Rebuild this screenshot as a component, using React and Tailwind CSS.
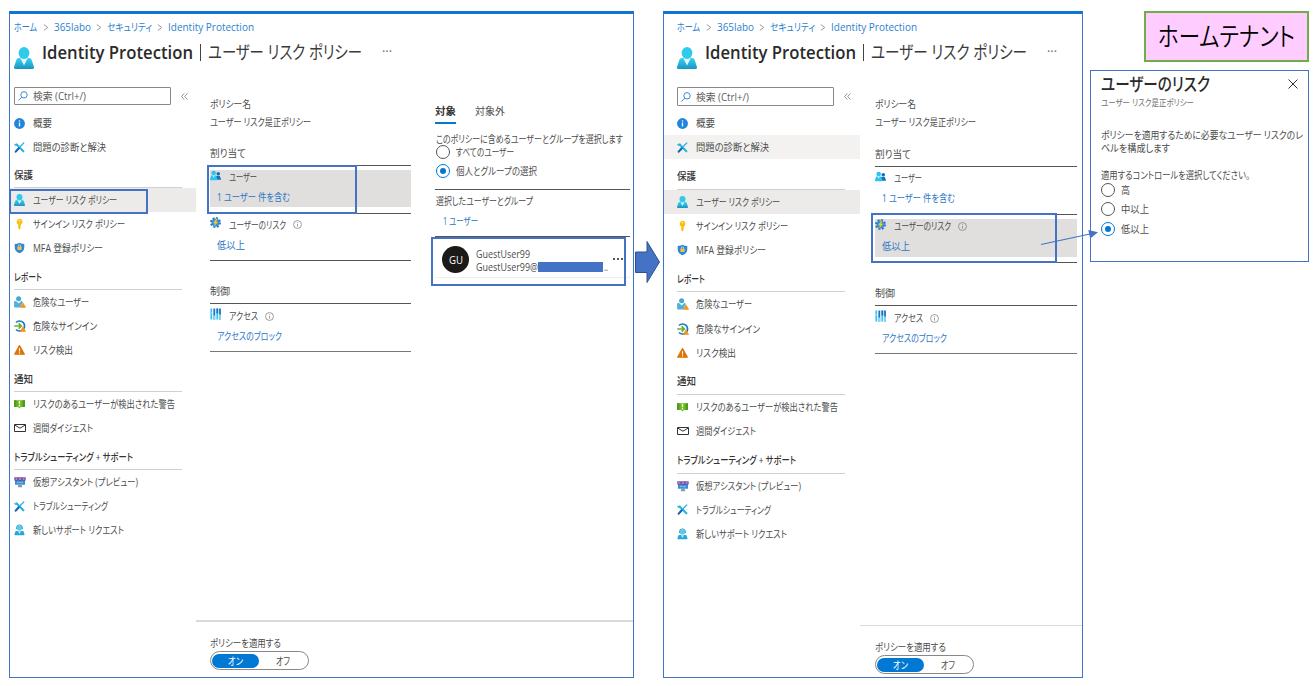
import { useLayoutEffect, useRef, useState } from "react";
import clsx from "clsx";

// Text squeezed horizontally so that it takes exactly `w` pixels
function Fit({ w, className, children }) {
  const ref = useRef(null);
  const [scale, setScale] = useState(1);

  useLayoutEffect(() => {
    const measure = () => {
      if (ref.current?.offsetWidth) {
        setScale((w / ref.current.getBoundingClientRect().width) * currentScale(ref.current));
      }
    };
    measure();
    document.fonts?.ready.then(measure);
  }, [w, children]);

  return (
    <span className={clsx("block shrink-0 whitespace-nowrap", className)} style={{ width: w }}>
      <span
        ref={ref}
        className="inline-block origin-left align-top"
        style={{ transform: `scaleX(${scale})` }}
      >
        {children}
      </span>
    </span>
  );
}

function currentScale(el) {
  const t = getComputedStyle(el).transform;
  return t === "none" ? 1 : new DOMMatrix(t).a;
}

/* ---------- icons ---------- */

function UserIcon({ className = "h-3 w-[11px]" }) {
  return (
    <svg viewBox="0 0 20 22" preserveAspectRatio="none" className={className}>
      <defs>
        <linearGradient id="usr" x1="0" y1="0" x2="0" y2="1">
          <stop offset="0" stopColor="#3ad3f2" />
          <stop offset="1" stopColor="#1994c2" />
        </linearGradient>
      </defs>
      <path d="M5 11h10c1.600 0 2.300.7 2.700 2L20 20.200c.3 1.100-.4 1.800-1.500 1.800h-17C.4 22-.3 21.300 0 20.200L2.300 13c.4-1.300 1.100-2 2.700-2z" fill="url(#usr)" />
      <path d="M6.300 11h7.400L10 18.500z" fill="#e3f7fc" />
      <ellipse cx="10" cy="6" rx="5.400" ry="5.900" fill="#2fcbea" />
    </svg>
  );
}

function InfoFilledIcon() {
  return (
    <svg viewBox="0 0 12 12" className="h-[11px] w-[11px]">
      <circle cx="6" cy="6" r="5.900" fill="#1f86dc" />
      <rect x="5.300" y="5" width="1.400" height="4.200" fill="#fff" />
      <circle cx="6" cy="3.300" r=".8" fill="#fff" />
    </svg>
  );
}

function ToolsIcon() {
  return (
    <svg viewBox="0 0 12 12" className="h-[11px] w-[11px]" fill="none" strokeLinecap="round">
      <path d="M2.800 2.600l7.400 7.600" stroke="#28b4de" strokeWidth="2.300" />
      <path d="M1 2.600c.4 1.300 1.900 1.500 2.600.2" stroke="#28b4de" strokeWidth="1.500" />
      <path d="M10.600 1L6.600 5.200" stroke="#3cb4e6" strokeWidth="1.500" />
      <path d="M5.200 6.900L1.900 10.500" stroke="#1467b0" strokeWidth="2.400" />
    </svg>
  );
}

function KeyIcon() {
  return (
    <svg viewBox="0 0 12 12" className="h-3 w-[11px]">
      <path d="M6 .3a3.300 3.300 0 0 1 1.500 6.200v1.200l-.7.7.7.7-.7.9.5.6L6 11.900l-1.400-1.300V6.500A3.300 3.300 0 0 1 6 .3z" fill="#fdbd0a" />
      <circle cx="6" cy="2.500" r=".8" fill="#fff3c4" />
    </svg>
  );
}

function ShieldIcon() {
  return (
    <svg viewBox="0 0 12 12" className="h-3 w-[11px]">
      <path d="M6 .4c1.500 1 3.400 1.200 5.200 1.200v4c0 3-2.900 5-5.200 6.200C3.700 10.600.8 8.600.8 5.600v-4C2.600 1.600 4.500 1.400 6 .4z" fill="#2f86dc" />
      <path d="M4.700 5V4a1.300 1.300 0 0 1 2.600 0v1" fill="none" stroke="#f5e6a8" strokeWidth=".9" />
      <rect x="3.700" y="4.700" width="4.600" height="3.500" rx=".5" fill="#f7c331" />
    </svg>
  );
}

function WarnBadge() {
  return <path d="M9 6.800L11.700 11.600H6.300z" fill="#f6921e" stroke="#f6921e" strokeWidth=".6" strokeLinejoin="round" />;
}

function RiskyUserIcon() {
  return (
    <svg viewBox="0 0 12 12" className="h-3 w-3">
      <circle cx="4.600" cy="2.700" r="2.500" fill="#45a9d4" />
      <path d="M.1 6c0-.7.4-1 1-1h.9l2.700 2.600L7.200 5c1 0 1.500.4 1.500 1.200L6 11.500H1c-.6 0-.9-.3-.9-.9z" fill="#4fb0d8" />
      <WarnBadge />
    </svg>
  );
}

function RiskySignInIcon() {
  return (
    <svg viewBox="0 0 12 12" className="h-3 w-3" fill="none">
      <path d="M2 2.500A5 5 0 1 1 2 9.500" stroke="#1b76c4" strokeWidth="1.700" />
      <path d="M.2 6h6.600M4.600 3.300L7.300 6 4.600 8.700" stroke="#6bb02a" strokeWidth="1.700" />
      <WarnBadge />
    </svg>
  );
}

function WarningIcon() {
  return (
    <svg viewBox="0 0 12 12" className="h-3 w-[11px]">
      <path d="M6 1.200l5.200 9.300H.8z" fill="#dc7508" stroke="#dc7508" strokeWidth="1.300" strokeLinejoin="round" />
      <path d="M6 4v3.500M6 8.400v1.300" stroke="#fff" strokeWidth="1.200" />
    </svg>
  );
}

function AlertIcon() {
  return (
    <svg viewBox="0 0 12 12" className="h-3 w-[11px]">
      <path d="M0 1.800h12v7.400H7.500L6 11 4.500 9.200H0z" fill="#6cb822" />
      <path d="M0 1.800h2.700v7.400H0zM9.300 1.800H12v7.400H9.300z" fill="#4c9e15" />
      <path d="M6 2.600v3.700M6 7.200v1.400" stroke="#fff" strokeWidth="1.400" />
    </svg>
  );
}

function MailIcon() {
  return (
    <svg viewBox="0 0 12 12" className="h-3 w-3" fill="none" stroke="#333" strokeWidth="1">
      <path d="M.5 2.500h11v7H.5zM.7 3L6 6.200 11.300 3" />
    </svg>
  );
}

function AssistantIcon() {
  return (
    <svg viewBox="0 0 12 12" className="h-3 w-3">
      <rect x="1" y="2.500" width="10" height="6.300" rx=".5" fill="#3291dc" />
      <path d="M4.500 8.800h3l.9 2.500H3.600z" fill="#8a979f" />
      <path d="M.3 1.300h11.400v2.200c0 1-.7 1.700-1.700 1.700s-1.600-.7-1.600-1.600c0 .9-.8 1.600-2.400 1.600s-2.400-.7-2.400-1.600c0 .9-.6 1.600-1.600 1.600S.3 4.500.3 3.500z" fill="#7a4fa3" />
      <path d="M1.500 3h1.800M5 3h2M8.800 3h1.700" stroke="#e6dcf2" strokeWidth=".8" />
      <path d="M3 6.800l2-.8 2 1 2-1" stroke="#bfe4fa" strokeWidth=".6" fill="none" />
    </svg>
  );
}

function SupportIcon() {
  return (
    <svg viewBox="0 0 12 12" className="h-3 w-[11px]">
      <path d="M2.500 7h7c.6 0 .9.300 1.100.8l.9 3c.1.500-.2.900-.8.900H1.300c-.6 0-.9-.4-.8-.9l.9-3c.2-.5.500-.8 1.100-.8z" fill="#25a9d8" />
      <circle cx="6" cy="3.900" r="2.900" fill="#5cc9ea" />
      <path d="M2.700 5V3.700a3.300 3.300 0 0 1 6.600 0V5" fill="none" stroke="#2b98c4" strokeWidth="1" />
      <path d="M4.300 7.300h3.400L6 10z" fill="#d9f3fb" />
    </svg>
  );
}

function UsersIcon() {
  return (
    <svg viewBox="0 0 12 12" className="h-[11px] w-[11px]">
      <circle cx="9" cy="4.200" r="2" fill="#1570c4" />
      <path d="M6.500 6.600h4.200L12 10c0 .4-.2.700-.6.700H7z" fill="#1570c4" />
      <circle cx="4" cy="3.200" r="2.500" fill="#2cc4ec" />
      <path d="M1.300 6h5.400L8 10.200c.1.500-.2.900-.7.900H.7c-.5 0-.8-.4-.7-.9z" fill="#2cc4ec" />
      <path d="M2.800 6h2.400L4 8.500z" fill="#dff6fc" />
    </svg>
  );
}

function GearIcon() {
  return (
    <svg viewBox="0 0 12 12" className="h-[11px] w-[11px]">
      <circle cx="6" cy="6" r="4.800" fill="none" stroke="#1f74c8" strokeWidth="2.300" strokeDasharray="2.100 1.670" />
      <circle cx="6" cy="6" r="4.300" fill="#2f8fe0" />
      <path d="M7 1.600L3.200 6.800h2.200L4.300 10.600l4.800-5.400H6.700l1.600-3.600z" fill="#fdc41f" />
    </svg>
  );
}

function AccessIcon() {
  return (
    <svg viewBox="0 0 11 12" className="h-3 w-[11px]" strokeWidth="1.800">
      <path d="M1.300 .5v11M7.300 .5v11" stroke="#39c3f0" />
      <path d="M4.300 .5v11M10 .5v11" stroke="#1c72c2" />
      <path d="M1.300 4v1.500M4.300 7.500v4M10 6.500v5" stroke="#8fdcf8" />
      <path d="M7.300 .5v5" stroke="#1c72c2" />
    </svg>
  );
}

function InfoIcon({ className }) {
  return (
    <svg viewBox="0 0 10 10" className={clsx("h-[9px] w-[9px]", className)} fill="none" stroke="#888" strokeWidth=".9">
      <circle cx="5" cy="5" r="4.400" />
      <path d="M5 4.400v3M5 2.500v1" />
    </svg>
  );
}

function Chevron({ className }) {
  return (
    <svg viewBox="0 0 6 7" className={clsx("h-[7px] w-[6px] shrink-0", className)} fill="none" stroke="#999" strokeWidth="1">
      <path d="M.8.6l4 2.900-4 2.900" />
    </svg>
  );
}

/* ---------- menu data ---------- */

const MENU = [
  {
    items: [
      { id: "overview", label: "概要", w: 19, icon: InfoFilledIcon },
      { id: "diagnose", label: "問題の診断と解決", w: 73, icon: ToolsIcon },
    ],
  },
  {
    title: "保護",
    w: 19,
    items: [
      { id: "user-risk", label: "ユーザー リスク ポリシー", w: 84, icon: UserIcon },
      { id: "signin-risk", label: "サインイン リスク ポリシー", w: 92, icon: KeyIcon },
      { id: "mfa", label: "MFA 登録ポリシー", w: 70, icon: ShieldIcon },
    ],
  },
  {
    title: "レポート",
    w: 28,
    items: [
      { id: "risky-users", label: "危険なユーザー", w: 56, icon: RiskyUserIcon },
      { id: "risky-signins", label: "危険なサインイン", w: 64, icon: RiskySignInIcon },
      { id: "detections", label: "リスク検出", w: 40, icon: WarningIcon },
    ],
  },
  {
    title: "通知",
    w: 19,
    items: [
      { id: "alerts", label: "リスクのあるユーザーが検出された警告", w: 142, icon: AlertIcon },
      { id: "digest", label: "週間ダイジェスト", w: 60, icon: MailIcon },
    ],
  },
  {
    title: "トラブルシューティング + サポート",
    w: 119,
    items: [
      { id: "assistant", label: "仮想アシスタント (プレビュー)", w: 105, icon: AssistantIcon },
      { id: "troubleshoot", label: "トラブルシューティング", w: 75, icon: ToolsIcon },
      { id: "support", label: "新しいサポート リクエスト", w: 91, icon: SupportIcon },
    ],
  },
];

/* ---------- portal pieces ---------- */

function Header({ wide }) {
  return (
    <header className={wide ? "pl-[12.500px]" : "pl-[3.500px]"}>
      <nav className="flex h-[27px] items-center text-[10.500px] text-[#2b7fd0]">
        <Fit w={23}>ホーム</Fit>
        <Chevron className="ml-[6px] mr-[5px]" />
        <Fit w={37}>365labo</Fit>
        <Chevron className="mx-[5px]" />
        <Fit w={45}>セキュリティ</Fit>
        <Chevron className="mx-[5px]" />
        <Fit w={86}>Identity Protection</Fit>
      </nav>
      <div className="flex h-[33px] items-start text-[#2b2b2b]">
        <UserIcon className="mt-[6px] h-[22px] w-5 shrink-0" />
        <div className="ml-[8.500px] flex h-[22px] items-center text-lg leading-none">
          <Fit w={151} className="font-semibold">Identity Protection</Fit>
          <span className="ml-[7px] h-[17px] w-px bg-[#444]" />
          <Fit w={wide ? 156 : 154} className="ml-[7px] text-[#3a3a3a]">ユーザー リスク ポリシー</Fit>
          <Fit w={10} className="ml-5 text-xs text-[#666]">···</Fit>
        </div>
      </div>
    </header>
  );
}

function Sidebar({ wide, hovered }) {
  const pad = wide ? "pl-[12.500px]" : "pl-[3.500px]";
  return (
    <aside className={clsx("shrink-0 pt-[13px]", wide ? "w-[196px]" : "w-[186px]")}>
      <div className={clsx("flex items-center", pad, wide ? "mb-[5px] h-[19px]" : "mb-[6px] h-[18px]")}>
        <div className="flex h-full w-[157px] items-center rounded-[1px] border border-[#8a8886] pl-[3px]">
          <svg viewBox="0 0 10 10" className="h-[10px] w-[10px]" fill="none" stroke="#3a8ad6" strokeWidth="1">
            <circle cx="6" cy="3.800" r="3.200" />
            <path d="M3.700 6.200L.5 9.500" />
          </svg>
          <Fit w={53} className="ml-[5px] text-[#5c5c5c]">検索 (Ctrl+/)</Fit>
        </div>
        <svg viewBox="0 0 8 8" className="ml-[10px] h-[7px] w-[7px]" fill="none" stroke="#777" strokeWidth=".9">
          <path d="M3.700.5L.7 4l3 3.500M7.300.5l-3 3.500 3 3.500" />
        </svg>
      </div>
      {MENU.map((section, i) => (
        <div key={section.title || "top"}>
          {section.title && (
            <div className={pad}>
              <div
                className={clsx(
                  "flex items-center border-b border-[#d0d0d0] pt-1 font-medium text-[#333]",
                  wide ? "mr-[15px]" : "mr-[14px]",
                  wide ? "h-[30.200px]" : i === 1 ? "h-[29px]" : "h-[30px]",
                )}
              >
                <Fit w={section.w}>{section.title}</Fit>
              </div>
            </div>
          )}
          {section.items.map(({ id, label, w, icon: Icon }) => (
            <div
              key={id}
              className={clsx(
                "flex items-center",
                pad,
                wide ? "h-[24.200px]" : "h-6",
                id === "user-risk" && "bg-[#edebe9]",
                id === hovered && "bg-[#f3f2f1]",
              )}
            >
              <span className="flex w-[19px] items-center">
                <Icon />
              </span>
              <Fit w={w}>{label}</Fit>
            </div>
          ))}
        </div>
      ))}
    </aside>
  );
}

function Assignment({ icon: Icon, label, w, info, link, linkW, wide, active, className }) {
  return (
    <div className={clsx("border-t border-[#555]", wide ? "h-12" : "h-[47.500px]", className || "pt-1")}>
      <div className={clsx(wide ? "h-[38px]" : "h-[37px]", active && "bg-[#e1dfdd]")}>
        <div className="flex h-[14px] items-center">
          <span className="mb-1 w-[18.500px]">
            <Icon />
          </span>
          <Fit w={w}>{label}</Fit>
          {info && <InfoIcon className="ml-[7px]" />}
        </div>
        <div className="flex h-[26px] items-center pl-[7px] text-[#2b76c6]">
          <Fit w={linkW}>{link}</Fit>
        </div>
      </div>
    </div>
  );
}

function PolicyColumn({ wide, active }) {
  return (
    <div className={clsx("shrink-0 pt-[22px]", wide ? "w-[202px]" : "w-[201px]")}>
      <div className="flex h-4 items-center">
        <Fit w={41}>ポリシー名</Fit>
      </div>
      <div className="flex h-[19px] items-center">
        <Fit w={101}>ユーザー リスク是正ポリシー</Fit>
      </div>
      <div className={clsx("flex items-end", wide ? "h-[35px]" : "h-[34px]")}>
        <div className="flex h-6 items-center">
          <Fit w={36}>割り当て</Fit>
        </div>
      </div>
      <Assignment icon={UsersIcon} label="ユーザー" w={28} link="1 ユーザー 件を含む" linkW={73} wide={wide} active={active === "users"} />
      <Assignment icon={GearIcon} label="ユーザーのリスク" w={57} info link="低以上" linkW={28} wide={wide} active={active === "risk"} />
      <div className="flex h-[43px] items-end border-t border-[#555]">
        <div className="flex h-6 items-center">
          <Fit w={20}>制御</Fit>
        </div>
      </div>
      <Assignment icon={AccessIcon} label="アクセス" w={29} info link="アクセスのブロック" linkW={65} wide={wide} className="pt-[5px]" />
      <div className="border-t border-[#777]" />
    </div>
  );
}

function Radio({ label, w, checked }) {
  return (
    <div className="flex h-[19.500px] items-center">
      <span
        className={clsx(
          "flex h-[14px] w-[14px] shrink-0 items-center justify-center rounded-full border bg-white",
          checked ? "border-[#0078d4]" : "border-[#555]",
        )}
      >
        {checked && <span className="h-[6px] w-[6px] rounded-full bg-[#0078d4]" />}
      </span>
      <Fit w={w} className="ml-[6px]">{label}</Fit>
    </div>
  );
}

function TargetColumn() {
  return (
    <div className="ml-6 w-[195px] shrink-0 pt-[25px]">
      <div className="flex h-[25px]">
        <div className="flex items-center border-b-2 border-[#0078d4] font-bold text-[#333]">
          <Fit w={21}>対象</Fit>
        </div>
        <div className="ml-[19px] flex items-center pb-[2px]">
          <Fit w={30}>対象外</Fit>
        </div>
      </div>
      <div className="mt-2 flex h-[14px] items-center">
        <Fit w={187} className="ml-px">このポリシーに含めるユーザーとグループを選択します</Fit>
      </div>
      <div className="-mt-[4px] pl-[1px]">
        <Radio label="すべてのユーザー" w={58} />
        <Radio label="個人とグループの選択" w={81} checked />
      </div>
      <div className="mt-2 border-t border-[#555]">
        <div className="flex h-[21px] items-center">
          <Fit w={97} className="ml-px">選択したユーザーとグループ</Fit>
        </div>
        <div className="flex h-[19px] items-center pl-2 text-[#2b76c6]">
          <Fit w={35}>1 ユーザー</Fit>
        </div>
      </div>
      <div className="mt-[6px] flex h-[42px] border-y border-t-[#555] border-b-[#eee] pl-[7px] pt-[9px]">
        <span className="flex h-[27px] w-[27px] items-center justify-center rounded-full bg-[#1b1a19] text-[11px] text-white">
          <Fit w={14}>GU</Fit>
        </span>
        <div className="ml-[6.500px] pt-[1px]">
          <div className="flex h-[13px] items-center">
            <Fit w={54}>GuestUser99</Fit>
          </div>
          <div className="flex h-[13px] items-center">
            <Fit w={62}>GuestUser99@</Fit>
            <span className="h-[10px] w-[65px] bg-[#4472c4]" />
            <Fit w={4} className="ml-px">..</Fit>
          </div>
        </div>
        <div className="ml-[5px] mt-[12px] flex gap-[2px]">
          <span className="h-[2px] w-[2px] bg-[#555]" />
          <span className="h-[2px] w-[2px] bg-[#555]" />
          <span className="h-[2px] w-[2px] bg-[#555]" />
        </div>
      </div>
    </div>
  );
}

function Footer({ wide }) {
  return (
    <div className={clsx("shrink-0 border-t border-[#d9d9d9]", wide ? "h-[52px] pl-[15px]" : "h-[57px] border-t-2 pl-[14px]")}>
      <div className="mt-[13px] flex h-4 items-center">
        <Fit w={71}>ポリシーを適用する</Fit>
      </div>
      <div className="flex h-[19px] w-[99px] items-center rounded-full border border-[#8a8886] px-[1px]">
        <span className="flex h-[14px] w-[47px] items-center justify-center rounded-full bg-[#0078d4] text-white">
          <Fit w={15}>オン</Fit>
        </span>
        <span className="flex w-[48px] items-center justify-center">
          <Fit w={14}>オフ</Fit>
        </span>
      </div>
    </div>
  );
}

function Portal({ wide, active, hovered, className, children }) {
  return (
    <section className={clsx("flex h-[667px] shrink-0 flex-col border border-t-[3px] border-[#4472c4] border-t-[#0f75d0] bg-white", className)}>
      <Header wide={wide} />
      <div className="flex min-h-0 flex-1">
        <Sidebar wide={wide} hovered={hovered} />
        <main className="flex min-w-0 flex-1 flex-col">
          <div className={clsx("flex min-h-0 flex-1", wide ? "pl-[15px]" : "pl-[14px]")}>
            <PolicyColumn wide={wide} active={active} />
            {children}
          </div>
          <Footer wide={wide} />
        </main>
      </div>
    </section>
  );
}

function RiskDialog() {
  return (
    <section className="mt-2 h-[192px] w-[219px] self-end border border-[#4472c4] bg-white pl-[10px]">
      <div className="flex h-[26px] items-center justify-between pr-[10px] text-lg leading-none text-[#2b2b2b]">
        <Fit w={109} className="font-medium">ユーザーのリスク</Fit>
        <svg viewBox="0 0 10 10" className="h-[10px] w-[10px]" stroke="#333" strokeWidth="1">
          <path d="M.5.5l9 9M9.500.5l-9 9" />
        </svg>
      </div>
      <div className="flex h-[10px] items-center text-[9px] text-[#707070]">
        <Fit w={93}>ユーザー リスク是正ポリシー</Fit>
      </div>
      <div className="mt-[21px]">
        <div className="flex h-[13px] items-center">
          <Fit w={202}>ポリシーを適用するために必要なユーザー リスクのレ</Fit>
        </div>
        <div className="flex h-[13px] items-center">
          <Fit w={69}>ベルを構成します</Fit>
        </div>
      </div>
      <div className="mt-[14px] flex h-[14px] items-center">
        <Fit w={149}>適用するコントロールを選択してください。</Fit>
      </div>
      <div className="-mt-[2px]">
        <Radio label="高" w={9} />
        <Radio label="中以上" w={28} />
        <Radio label="低以上" w={28} checked />
      </div>
    </section>
  );
}

export default function App() {
  return (
    <div className="relative flex h-[686px] w-[1315px] overflow-hidden bg-white pl-[9px] pt-[11px] font-['Open_Sans','Noto_Sans_CJK_JP',sans-serif] text-[10px] leading-none text-[#4c4c4c] [font-feature-settings:'palt']">
      <Portal active="users" className="w-[625px]">
        <TargetColumn />
      </Portal>

      <svg viewBox="0 0 27 44" className="mt-[229px] h-[44px] w-[27px] shrink-0" fill="#4472c4" stroke="#2f528f" strokeWidth="1">
        <path d="M1.500 12H13V1.500L25.500 22 13 42.500V32.500H1.500z" />
      </svg>

      <Portal wide active="risk" hovered="diagnose" className="ml-[2px] w-[420px]" />

      <div className="ml-[7px] flex w-[219px] flex-col">
        <div className="flex h-[51px] w-[165px] items-center justify-center self-end border-2 border-[#70ad47] bg-[#ffccff] pb-[2px] text-[26px] font-[350] text-black">
          <Fit w={137}>ホームテナント</Fit>
        </div>
        <RiskDialog />
      </div>

      {/* callout frames */}
      <div className="absolute left-[9px] top-[189px] h-[25px] w-[139px] border-2 border-[#4472c4]" />
      <div className="absolute left-[207px] top-[165px] h-[49px] w-[150px] border-2 border-[#4472c4]" />
      <div className="absolute left-[431px] top-[237px] h-[49px] w-[195px] border-2 border-[#4472c4]" />
      <div className="absolute left-[871px] top-[213px] h-[50px] w-[186px] border-2 border-[#4472c4]" />
      <svg viewBox="0 0 60 20" className="absolute left-[1040px] top-[228px] h-5 w-[60px]" fill="#4472c4">
        <path d="M1 16.500L50 6" stroke="#4472c4" strokeWidth="1.200" />
        <path d="M58 4.300L48.300 2l1.900 8.500z" />
      </svg>
    </div>
  );
}
